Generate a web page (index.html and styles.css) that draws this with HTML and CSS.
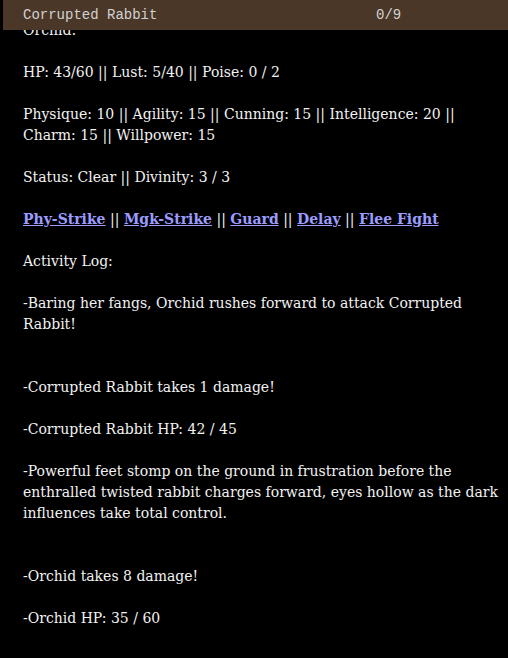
FILE: index.html
```html
<!DOCTYPE html>
<html lang="en">
<head>
  <meta charset="UTF-8" />
  <title>Battle - Corrupted Rabbit</title>
  <link rel="stylesheet" href="styles.css">
</head>
<body>
  <div class="topbar">
    <span class="enemy-name">Corrupted Rabbit</span>
    <span class="turns">0/9</span>
  </div>

  <div class="battle-text">
    Orchid:<br><br>
    HP: 43/60 || Lust: 5/40 || Poise: 0 / 2<br><br>
    Physique: 10 || Agility: 15 || Cunning: 15 || Intelligence: 20 || Charm: 15 || Willpower: 15<br><br>
    Status: Clear || Divinity: 3 / 3<br><br>
    <a href="#">Phy-Strike</a> || <a href="#">Mgk-Strike</a> || <a href="#">Guard</a> || <a href="#">Delay</a> || <a href="#">Flee Fight</a><br><br>
    Activity Log:<br><br>
    -Baring her fangs, Orchid rushes forward to attack Corrupted Rabbit!<br><br><br>
    -Corrupted Rabbit takes 1 damage!<br><br>
    -Corrupted Rabbit HP: 42 / 45<br><br>
    -Powerful feet stomp on the ground in frustration before the enthralled twisted rabbit charges forward, eyes hollow as the dark influences take total control.<br><br><br>
    -Orchid takes 8 damage!<br><br>
    -Orchid HP: 35 / 60
  </div>
</body>
</html>
```

FILE: styles.css
```css
body {
  margin: 0;
  background: #000;
  color: #f2f2f2;
  font-family: "DejaVu Serif", serif;
}

.topbar {
  position: fixed;
  top: 0;
  left: 3px;
  right: 0;
  height: 30px;
  background: #4a3727;
  color: #d2d2d2;
  font-family: "Liberation Mono", monospace;
  font-size: 14px;
  display: flex;
  align-items: center;
  padding-left: 20px;
}

.enemy-name {
  width: 353px;
}

.battle-text {
  padding: 20px 4px 20px 23px;
  font-size: 14px;
  line-height: 21px;
}

.battle-text a {
  color: #9c9cff;
  font-weight: bold;
}
```
